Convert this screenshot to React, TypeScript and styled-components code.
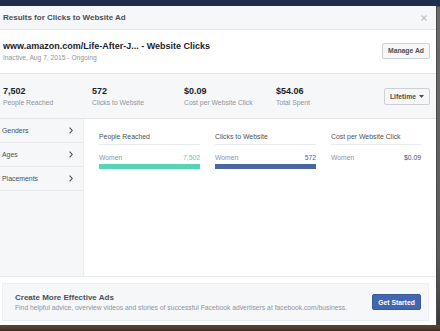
import React from 'react'
import styled, { createGlobalStyle } from 'styled-components'

const GlobalStyle = createGlobalStyle`
  html, body {
    margin: 0;
    padding: 0;
    width: 440px;
    height: 331px;
    overflow: hidden;
  }
  body {
    font-family: 'Liberation Sans', Arial, sans-serif;
    background: linear-gradient(180deg, #1f2d4c 0px, #1f2d4c 6px, #6a6a6a 7px, #5b5b5b 260px, #3a3a3a 324px, #5a4436 326px, #3b2c24 331px);
  }
`

const Page = styled.div`
  padding-top: 6px;
`

const Modal = styled.div`
  margin-left: -6px;
  width: 443px;
  height: 319px;
  background: #fff;
  border-right: 1px solid #4a4a4a;
  box-sizing: border-box;
  display: flex;
  flex-direction: column;
`

const Header = styled.div`
  height: 24px;
  box-sizing: border-box;
  background: #f6f7f9;
  border-bottom: 1px solid #e5e5e5;
  display: flex;
  align-items: center;
  justify-content: space-between;
  padding: 0 8px 0 9px;
`

const HeaderTitle = styled.div`
  font-size: 8px;
  font-weight: bold;
  color: #4b4f56;
`

const CloseButton = styled.span`
  display: flex;
  width: 8px;
  height: 8px;
  align-items: center;
  justify-content: center;
`

const AdInfo = styled.div`
  height: 44px;
  box-sizing: border-box;
  border-bottom: 1px solid #e5e5e5;
  display: flex;
  align-items: center;
  justify-content: space-between;
  padding: 0 6px 2px 9px;
`

const AdTitle = styled.div`
  font-size: 9px;
  font-weight: bold;
  color: #1d2129;
  line-height: 12px;
`

const AdMeta = styled.div`
  font-size: 6.7px;
  color: #90949c;
  margin-top: 2px;
`

const GhostButton = styled.button<{ $width: number; $height: number }>`
  width: ${({ $width }) => $width}px;
  height: ${({ $height }) => $height}px;
  padding: 0;
  background: #f6f7f9;
  border: 1px solid #ced0d4;
  border-radius: 2px;
  font-family: inherit;
  font-size: 6.8px;
  font-weight: bold;
  color: #4b4f56;
  display: flex;
  align-items: center;
  justify-content: center;
  gap: 3px;
`

const Stats = styled.div`
  height: 45px;
  box-sizing: border-box;
  background: #f6f7f9;
  border-bottom: 1px solid #e5e5e5;
  display: grid;
  grid-template-columns: 89px 92px 92px 1fr auto;
  align-items: center;
  padding: 0 6px 0 9px;
`

const StatValue = styled.div`
  font-size: 9px;
  font-weight: bold;
  color: #1d2129;
`

const StatLabel = styled.div`
  font-size: 6.8px;
  color: #90949c;
  margin-top: 3px;
`

const Body = styled.div`
  height: 157px;
  display: flex;
`

const Sidebar = styled.div`
  width: 89px;
  flex: none;
  background: #f6f7f9;
  border-right: 1px solid #e9ebee;
`

const SideItem = styled.div`
  height: 24px;
  box-sizing: border-box;
  border-bottom: 1px solid #e9ebee;
  display: flex;
  align-items: center;
  justify-content: space-between;
  padding: 0 10px 0 8px;
  font-size: 6.9px;
  color: #4b4f56;
`

const Breakdown = styled.div`
  flex: 1;
  display: grid;
  grid-template-columns: 101px 101px 90px;
  column-gap: 15px;
  align-content: start;
  padding: 14px 0 0 15px;
`

const Column = styled.div`
  display: flex;
  flex-direction: column;
`

const ColumnHead = styled.div`
  font-size: 6.9px;
  color: #4b4f56;
  padding-bottom: 4px;
  border-bottom: 1px solid #e9ebee;
`

const DataRow = styled.div`
  display: flex;
  justify-content: space-between;
  font-size: 6.8px;
  color: #90949c;
  margin-top: 9px;
`

const DataValue = styled.span<{ $color: string }>`
  color: ${({ $color }) => $color};
`

const Bar = styled.div<{ $color: string }>`
  height: 5px;
  margin-top: 3px;
  background: ${({ $color }) => $color};
`

const Footer = styled.div`
  flex: 1;
  border-top: 1px solid #e9ebee;
  padding: 6px 7px 4px 8px;
  display: flex;
`

const Promo = styled.div`
  flex: 1;
  background: #f6f7f9;
  border: 1px solid #edeef1;
  display: flex;
  align-items: center;
  justify-content: space-between;
  padding: 0 7px 0 12px;
`

const PromoTitle = styled.div`
  font-size: 8px;
  font-weight: bold;
  color: #4b4f56;
`

const PromoText = styled.div`
  font-size: 6.75px;
  color: #90949c;
  margin-top: 2px;
`

const PrimaryButton = styled.button`
  width: 49px;
  height: 16px;
  padding: 0;
  border: 1px solid #3b5998;
  border-radius: 2px;
  background: #4267b2;
  color: #fff;
  font-family: inherit;
  font-size: 6.8px;
  font-weight: bold;
`

const Chevron = () => (
  <svg width="4" height="7" viewBox="0 0 4 7">
    <path d="M0.6 0.6 L3.2 3.5 L0.6 6.4" fill="none" stroke="#4b4f56" strokeWidth="1.1" />
  </svg>
)

const stats = [
  { value: '7,502', label: 'People Reached' },
  { value: '572', label: 'Clicks to Website' },
  { value: '$0.09', label: 'Cost per Website Click' },
  { value: '$54.06', label: 'Total Spent' },
]

const columns = [
  { head: 'People Reached', value: '7,502', color: '#4fd1b2', bar: '#56d4b4' },
  { head: 'Clicks to Website', value: '572', color: '#4a65a0', bar: '#4a65a0' },
  { head: 'Cost per Website Click', value: '$0.09', color: '#4b4f56', bar: '' },
]

export default function App() {
  return (
    <Page>
      <GlobalStyle />
      <Modal>
        <Header>
          <HeaderTitle>Results for Clicks to Website Ad</HeaderTitle>
          <CloseButton>
            <svg width="6" height="6" viewBox="0 0 6 6">
              <path d="M0.5 0.5 L5.5 5.5 M5.5 0.5 L0.5 5.5" stroke="#bec2c9" strokeWidth="1.2" />
            </svg>
          </CloseButton>
        </Header>

        <AdInfo>
          <div>
            <AdTitle>www.amazon.com/Life-After-J... - Website Clicks</AdTitle>
            <AdMeta>Inactive, Aug 7, 2015 - Ongoing</AdMeta>
          </div>
          <GhostButton $width={48} $height={16}>Manage Ad</GhostButton>
        </AdInfo>

        <Stats>
          {stats.map((s) => (
            <div key={s.label}>
              <StatValue>{s.value}</StatValue>
              <StatLabel>{s.label}</StatLabel>
            </div>
          ))}
          <GhostButton $width={46} $height={17}>
            Lifetime
            <svg width="5" height="3" viewBox="0 0 5 3">
              <path d="M0 0 L5 0 L2.5 3 Z" fill="#4b4f56" />
            </svg>
          </GhostButton>
        </Stats>

        <Body>
          <Sidebar>
            {['Genders', 'Ages', 'Placements'].map((item) => (
              <SideItem key={item}>
                {item}
                <Chevron />
              </SideItem>
            ))}
          </Sidebar>
          <Breakdown>
            {columns.map((c) => (
              <Column key={c.head}>
                <ColumnHead>{c.head}</ColumnHead>
                <DataRow>
                  Women
                  <DataValue $color={c.color}>{c.value}</DataValue>
                </DataRow>
                {c.bar && <Bar $color={c.bar} />}
              </Column>
            ))}
          </Breakdown>
        </Body>

        <Footer>
          <Promo>
            <div>
              <PromoTitle>Create More Effective Ads</PromoTitle>
              <PromoText>
                Find helpful advice, overview videos and stories of successful Facebook advertisers at facebook.com/business.
              </PromoText>
            </div>
            <PrimaryButton>Get Started</PrimaryButton>
          </Promo>
        </Footer>
      </Modal>
    </Page>
  )
}
